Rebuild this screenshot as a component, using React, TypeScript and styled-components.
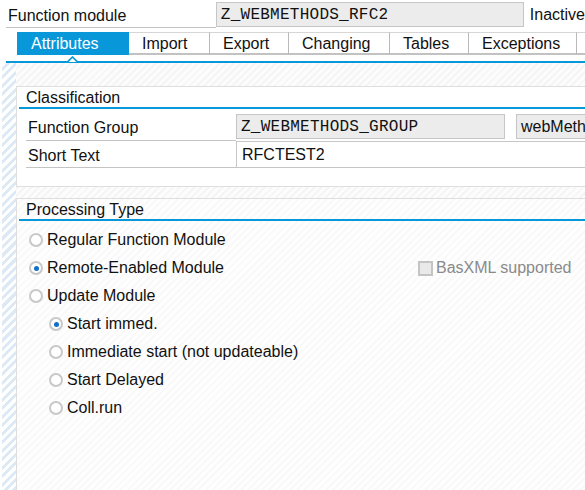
import React from "react";
import styled, { createGlobalStyle, css } from "styled-components";

const BLUE = "#0897d8";

const GlobalStyle = createGlobalStyle`
    html, body {
        margin: 0;
        padding: 0;
        background: #ffffff;
    }
    body {
        font-family: "Liberation Sans", Arial, sans-serif;
        font-size: 16px;
        color: #111111;
    }
`;

interface TabData {
    label: string;
    width: number;
}

const tabs: Array<TabData> = [
    { label: "Attributes", width: 112 },
    { label: "Import", width: 81 },
    { label: "Export", width: 79 },
    { label: "Changing", width: 101 },
    { label: "Tables", width: 79 },
    { label: "Exceptions", width: 108 },
    { label: "", width: 110 },
];

export default function App() {
    return (
        <Page>
            <GlobalStyle />
            {/* header */}
            <Header>
                <HeaderLabel>Function module</HeaderLabel>
                <Field $width={308} $mono>Z_WEBMETHODS_RFC2</Field>
                <Status>Inactive</Status>
            </Header>

            {/* tabs */}
            <TabStrip>
                {tabs.map((t, i) => (
                    <Tab key={i} $width={t.width} $active={i === 0}>
                        {t.label}
                    </Tab>
                ))}
            </TabStrip>
            <TabRule>
                <Caret width="11" height="6" viewBox="0 0 11 6">
                    <polygon points="0.5,6 5.5,1 10.5,6" fill="#ffffff" />
                    <polyline points="0.5,6 5.5,1 10.5,6" fill="none" stroke={BLUE} strokeWidth="1.6" />
                </Caret>
            </TabRule>

            <Body>
                <SideStrip />
                <Content>
                    {/* Classification */}
                    <Group>
                        <GroupTitle>Classification</GroupTitle>
                        <Fields>
                            <FieldRow $height={32}>
                                <FieldLabel $padTop={9} $lineAt={31}>Function Group</FieldLabel>
                                <Field $width={269} $mono $top={5}>Z_WEBMETHODS_GROUP</Field>
                                <Field $width={120} $top={5} $gap={11}>webMethods</Field>
                            </FieldRow>
                            <FieldRow $height={27}>
                                <FieldLabel $padTop={5} $lineAt={26}>Short Text</FieldLabel>
                                <TextField>RFCTEST2</TextField>
                            </FieldRow>
                        </Fields>
                    </Group>

                    {/* Processing Type */}
                    <Group $fill>
                        <GroupTitle>Processing Type</GroupTitle>
                        <OptionList>
                            <OptionRow>
                                <Option><Radio />Regular Function Module</Option>
                            </OptionRow>
                            <OptionRow>
                                <Option><Radio $checked />Remote-Enabled Module</Option>
                                <Check><CheckBox />BasXML supported</Check>
                            </OptionRow>
                            <OptionRow>
                                <Option><Radio />Update Module</Option>
                            </OptionRow>
                            <OptionRow $nested>
                                <Option><Radio $checked />Start immed.</Option>
                            </OptionRow>
                            <OptionRow $nested>
                                <Option><Radio />Immediate start (not updateable)</Option>
                            </OptionRow>
                            <OptionRow $nested>
                                <Option><Radio />Start Delayed</Option>
                            </OptionRow>
                            <OptionRow $nested>
                                <Option><Radio />Coll.run</Option>
                            </OptionRow>
                        </OptionList>
                    </Group>
                </Content>
            </Body>
        </Page>
    );
}

const Page = styled.div`
    width: 585px;
    height: 490px;
    overflow: hidden;
    display: flex;
    flex-direction: column;
    background: #ffffff;
`;

const Header = styled.div`
    display: flex;
    align-items: flex-start;
    height: 28px;
    padding-left: 6px;
    white-space: nowrap;
`;

const HeaderLabel = styled.div`
    width: 210px;
    box-sizing: border-box;
    height: 28px;
    padding: 6px 0 0 2px;
    line-height: 20px;
    border-bottom: 1px solid #c4c4c4;
`;

const Field = styled.div<{ $width: number; $mono?: boolean; $top?: number; $gap?: number }>`
    flex: none;
    width: ${p => p.$width}px;
    height: 25px;
    box-sizing: border-box;
    margin-top: ${p => p.$top ?? 2}px;
    margin-left: ${p => p.$gap ?? 0}px;
    padding: 1px 0 0 4px;
    background: #ececec;
    border: 1px solid #c6c6c6;
    line-height: 22px;
    white-space: nowrap;
    overflow: hidden;
    ${p => p.$mono && css`
        font-family: "Liberation Mono", "DejaVu Sans Mono", monospace;
        letter-spacing: 0.25px;
    `}
`;

const Status = styled.div`
    margin-left: 6px;
    padding-top: 1px;
    line-height: 28px;
`;

const TabStrip = styled.div`
    display: flex;
    margin-top: 4px;
    height: 23px;
    padding-left: 17px;
    white-space: nowrap;
`;

const Tab = styled.div<{ $width: number; $active?: boolean }>`
    flex: none;
    width: ${p => p.$width}px;
    box-sizing: border-box;
    padding: 1px 0 0 13px;
    line-height: 20px;
    border-top: 1px solid #d6d6d6;
    border-right: 1px solid #b9b9b9;
    border-bottom: 2px solid #c2c2c2;
    background: #ffffff;
    ${p => p.$active && css`
        background: ${BLUE};
        color: #ffffff;
        border-color: ${BLUE};
        padding-left: 14px;
    `}
`;

const TabRule = styled.div`
    position: relative;
    margin: 6px 0 0 6px;
    height: 2px;
    background: ${BLUE};
`;

const Caret = styled.svg`
    position: absolute;
    left: 61px;
    top: -5px;
    display: block;
`;

const Body = styled.div`
    flex: 1;
    display: flex;
    min-height: 0;
`;

const SideStrip = styled.div`
    flex: none;
    width: 14px;
    margin-left: 2px;
    background: repeating-linear-gradient(135deg, #ffffff 0 3px, #dde9f5 3px 6px);
`;

const Content = styled.div`
    flex: 1;
    display: flex;
    flex-direction: column;
    gap: 11px;
    padding-top: 23px;
    min-width: 0;
    background: repeating-linear-gradient(135deg, #fcfcfc 0 3px, #f5f5f5 3px 5px);
`;

const Group = styled.div<{ $fill?: boolean }>`
    width: 640px;
    box-sizing: border-box;
    border: 1px solid #dedede;
    border-right: none;
    background: #ffffff;
    padding-left: 2px;
    ${p => p.$fill
        ? css`
            flex: 1;
            border-bottom: none;
            background: repeating-linear-gradient(135deg, #fefefe 0 3px, #f9f9f9 3px 5px);
        `
        : css`
            height: 101px;
        `}
`;

const GroupTitle = styled.div`
    height: 20px;
    box-sizing: border-box;
    padding: 1px 0 0 7px;
    line-height: 19px;
    border-bottom: 2px solid ${BLUE};
    box-sizing: content-box;
    height: 19px;
`;

const Fields = styled.div`
    padding-left: 7px;
`;

const FieldRow = styled.div<{ $height: number }>`
    display: flex;
    align-items: flex-start;
    height: ${p => p.$height}px;
`;

const FieldLabel = styled.div<{ $padTop: number; $lineAt: number }>`
    flex: none;
    width: 210px;
    box-sizing: border-box;
    height: ${p => p.$lineAt + 1}px;
    padding: ${p => p.$padTop}px 0 0 2px;
    line-height: 20px;
    border-bottom: 1px solid #c4c4c4;
`;

const TextField = styled.div`
    flex: 1;
    height: 27px;
    box-sizing: border-box;
    padding: 1px 0 0 5px;
    border-top: 1px solid #c6c6c6;
    border-left: 1px solid #c6c6c6;
    border-bottom: 1px solid #c6c6c6;
    line-height: 24px;
`;

const OptionList = styled.div`
    padding: 5px 0 0 10px;
`;

const OptionRow = styled.div<{ $nested?: boolean }>`
    display: grid;
    grid-template-columns: 389px auto;
    align-items: center;
    height: 28px;
    padding-left: ${p => (p.$nested ? 20 : 0)}px;
`;

const Option = styled.div`
    display: flex;
    align-items: center;
    gap: 4px;
    white-space: nowrap;
`;

const Radio = styled.span<{ $checked?: boolean }>`
    position: relative;
    flex: none;
    width: 14px;
    height: 14px;
    box-sizing: border-box;
    border: 2px solid #c8c8c8;
    border-radius: 50%;
    background: #ffffff;
    ${p => p.$checked && css`
        &::after {
            content: "";
            position: absolute;
            left: 2.5px;
            top: 2.5px;
            width: 5px;
            height: 5px;
            border-radius: 50%;
            background: #1070c8;
        }
    `}
`;

const Check = styled.div`
    display: flex;
    align-items: center;
    gap: 3px;
    color: #8a8a8a;
    white-space: nowrap;
`;

const CheckBox = styled.span`
    flex: none;
    width: 15px;
    height: 15px;
    box-sizing: border-box;
    border: 2px solid #c4c4c4;
    background: #e9e9e9;
`;
